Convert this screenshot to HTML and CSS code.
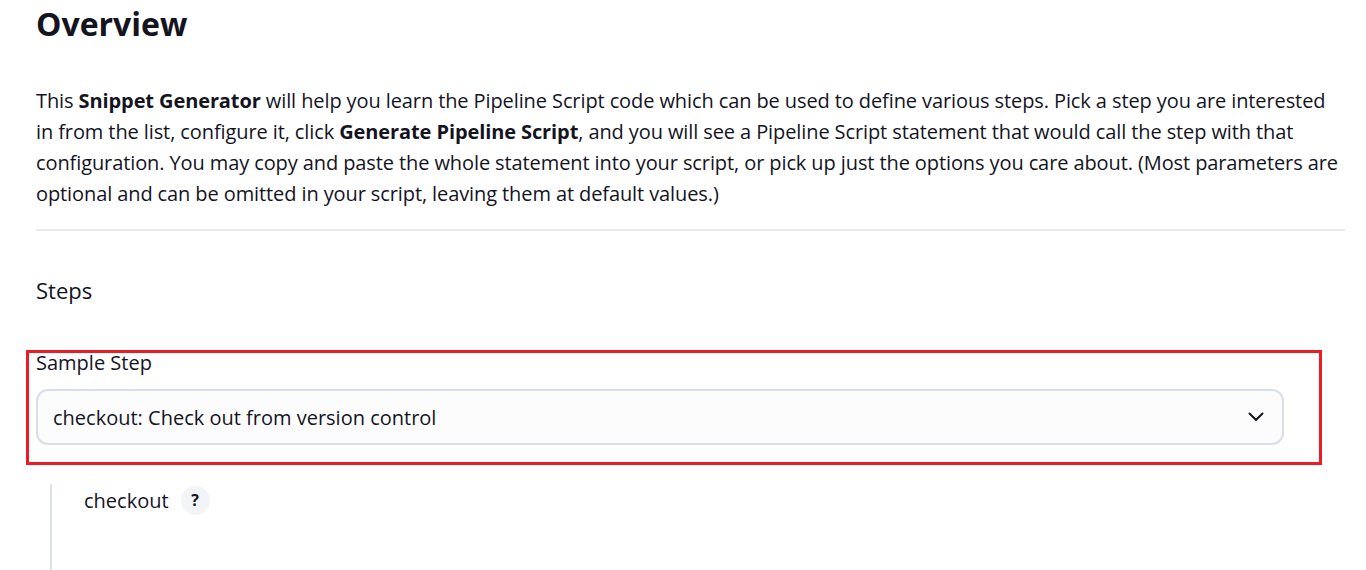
FILE: index.html
```html
<!DOCTYPE html>
<html lang="en">
<head>
<meta charset="utf-8">
<title>Snippet Generator</title>
<link rel="stylesheet" href="styles.css">
</head>
<body>
<main class="page">
  <h1 class="title">Overview</h1>
  <p class="intro">This <strong>Snippet Generator</strong> will help you learn the Pipeline Script code which can be used to define various steps. Pick a step you are interested in from the list, configure it, click <strong>Generate Pipeline Script</strong>, and you will see a Pipeline Script statement that would call the step with that configuration. You may copy and paste the whole statement into your script, or pick up just the options you care about. (Most parameters are optional and can be omitted in your script, leaving them at default values.)</p>
  <hr class="divider">
  <h2 class="section">Steps</h2>
  <div class="highlight">
    <div class="field-label">Sample Step</div>
    <div class="select">
      <span class="select-value">checkout: Check out from version control</span>
      <svg class="chevron" width="16" height="10" viewBox="0 0 16 10"><path d="M1.5 1.5 L8 8 L14.5 1.5" fill="none" stroke="#14141f" stroke-width="2" stroke-linecap="round" stroke-linejoin="round"/></svg>
    </div>
  </div>
  <div class="nested">
    <div class="nested-row">
      <span class="nested-label">checkout</span>
      <span class="help">?</span>
    </div>
  </div>
</main>
</body>
</html>
```
FILE: styles.css
```css
html, body {
  margin: 0;
  padding: 0;
  background: #ffffff;
}
body {
  font-family: "Open Sans", "Noto Sans", sans-serif;
  color: #14141f;
  overflow: hidden;
}
.page {
  padding: 5px 21px 0 36px;
}
.title {
  margin: 0;
  font-size: 32px;
  line-height: 38px;
  font-weight: 700;
}
.intro {
  margin: 42px 0 0 0;
  font-size: 20px;
  line-height: 31px;
  letter-spacing: -0.1px;
}
.intro strong {
  font-weight: 700;
}
.divider {
  margin: 20px 0 0 0;
  border: none;
  height: 2px;
  background: #e9ebf1;
}
.section {
  margin: 44px 0 0 0;
  font-size: 22px;
  line-height: 30px;
  font-weight: 400;
}
.highlight {
  margin: 45px 0 0 -10px;
  width: 1296px;
  border: 3px solid #ed1c24;
  padding: 0 35px 17px 7px;
  box-sizing: border-box;
}
.field-label {
  font-size: 20px;
  line-height: 20px;
}
.select {
  margin-top: 16px;
  height: 56px;
  box-sizing: border-box;
  border: 2px solid #dadeea;
  border-radius: 12px;
  background: #fcfcfd;
  display: flex;
  align-items: center;
  justify-content: space-between;
  padding: 0 18px 0 15px;
}
.select-value {
  font-size: 20px;
}
.chevron {
  display: block;
}
.nested {
  margin: 19px 0 0 14px;
  border-left: 2px solid #dde1ec;
  padding-left: 32px;
  height: 100px;
}
.nested-row {
  display: flex;
  align-items: center;
  gap: 12px;
  height: 32px;
}
.nested-label {
  font-size: 20px;
}
.help {
  width: 29px;
  height: 29px;
  border-radius: 50%;
  background: #f2f4f7;
  display: flex;
  align-items: center;
  justify-content: center;
  font-size: 16px;
  font-weight: 700;
}
```
